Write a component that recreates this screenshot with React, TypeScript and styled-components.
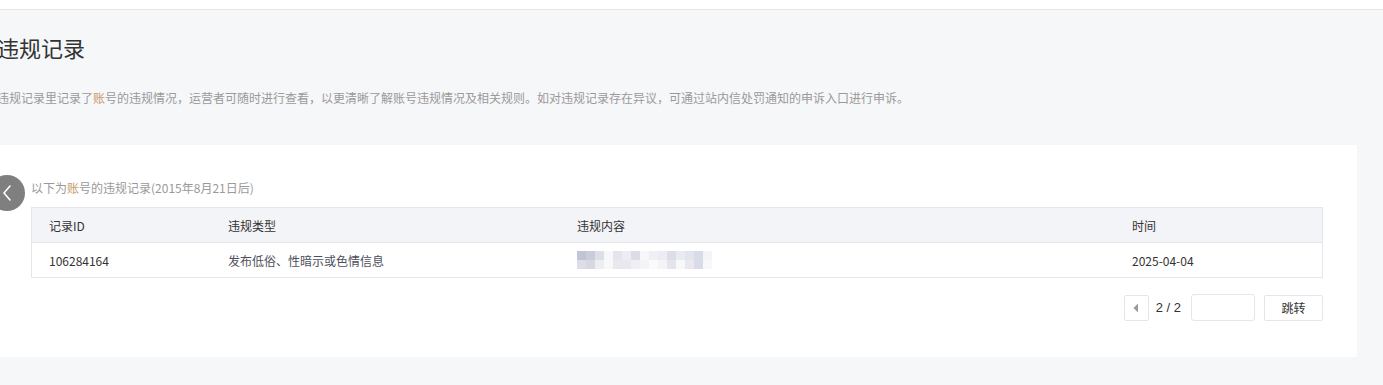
import React from 'react';
import styled, { createGlobalStyle } from 'styled-components';

const GlobalStyle = createGlobalStyle`
  html, body {
    margin: 0;
    padding: 0;
    background: #f6f7f9;
    overflow: hidden;
  }
  body {
    font-family: "Noto Sans CJK SC", "Noto Sans", sans-serif;
    color: #333;
  }
`;

const TopBar = styled.div`
  height: 9px;
  background: #fff;
  border-bottom: 1px solid #e4e5e7;
`;

const Main = styled.div`
  margin-left: -3px;
  width: 1360px;
`;

const Title = styled.h1`
  margin: 0;
  padding-top: 22px;
  font-size: 22px;
  font-weight: 400;
  line-height: 30px;
  color: #333;
`;

const Desc = styled.p`
  margin: 0;
  padding-top: 27px;
  font-size: 12px;
  line-height: 18px;
  color: #9a9a9a;
`;

const Hl = styled.span`
  color: #c99a68;
`;

const Card = styled.div`
  position: relative;
  margin-top: 38px;
  margin-left: 3px;
  width: 1357px;
  box-sizing: border-box;
  background: #fff;
  border-radius: 0 2px 2px 0;
  padding: 35px 34px 36px 31px;
`;

const BackBtn = styled.div`
  position: absolute;
  left: -11px;
  top: 30px;
  width: 36px;
  height: 36px;
  border-radius: 50%;
  background: #7f7f7f;
  display: flex;
  align-items: center;
  justify-content: center;
`;

const Caption = styled.div`
  font-size: 12px;
  line-height: 16px;
  color: #9a9a9a;
  margin-bottom: 11px;
`;

const Table = styled.table`
  width: 1292px;
  border-collapse: collapse;
  table-layout: fixed;
  font-size: 12px;
`;

const Th = styled.th<{ $w?: number }>`
  width: ${(p) => (p.$w ? `${p.$w}px` : 'auto')};
  height: 34px;
  padding: 0 0 0 17px;
  text-align: left;
  font-weight: 400;
  color: #333;
  background: #f3f4f7;
  border-top: 1px solid #e4e6eb;
  border-bottom: 1px solid #e4e6eb;
  &:first-child { border-left: 1px solid #e4e6eb; }
  &:last-child { border-right: 1px solid #e4e6eb; }
`;

const Td = styled.td<{ $muted?: boolean }>`
  height: 34px;
  padding: 0 0 0 17px;
  color: ${(p) => (p.$muted ? '#4d4f5c' : '#333')};
  border-bottom: 1px solid #e4e6eb;
  &:first-child { border-left: 1px solid #e4e6eb; }
  &:last-child { border-right: 1px solid #e4e6eb; }
`;

const Mosaic = styled.div`
  display: grid;
  grid-template-columns: repeat(15, 9px);
  grid-auto-rows: 9px;
`;

const Px = styled.div<{ $c: string }>`
  background: ${(p) => p.$c};
`;

const Pager = styled.div`
  display: flex;
  justify-content: flex-end;
  align-items: center;
  margin-top: 16px;
  height: 27px;
`;

const PrevBtn = styled.div`
  width: 23px;
  height: 24px;
  border: 1px solid #e4e6eb;
  border-radius: 2px;
  display: flex;
  align-items: center;
  justify-content: center;
  box-sizing: content-box;
`;

const PageText = styled.span`
  font-family: "Liberation Sans", sans-serif;
  font-size: 13px;
  color: #333;
  margin: 0 10px 0 7px;
`;

const PageInput = styled.input`
  width: 64px;
  height: 27px;
  box-sizing: border-box;
  border: 1px solid #e4e6eb;
  border-radius: 3px;
  outline: none;
`;

const JumpBtn = styled.button`
  margin-left: 9px;
  width: 59px;
  height: 26px;
  border: 1px solid #e4e6eb;
  border-radius: 2px;
  background: #fff;
  font-family: "Noto Sans CJK SC", sans-serif;
  font-size: 12px;
  color: #333;
  padding: 0;
`;

const mosaicTop = [
  '#c0c4d4', '#c8ccdb', '#dcdee8', '#f8f8fa', '#e4e4ec', '#ececf2', '#dcdce8', '#f8f8fa',
  '#f0f0f4', '#ececf2', '#dcdde6', '#e8ebf2', '#e4e4ec', '#d8dce8', '#f4f4f8',
];
const mosaicBottom = [
  '#dcdde6', '#d6d8e2', '#eeeef2', '#f8f8fa', '#e8e8ee', '#e8e8ee', '#f0f0f4', '#f4f4f6',
  '#fafafa', '#f4f4f6', '#e4e4ec', '#f8f8fa', '#e8e8ee', '#d8dce8', '#f8f8fa',
];

const App = () => {
  return (
    <>
      <GlobalStyle />
      <TopBar />
      <Main>
        <Title>违规记录</Title>
        <Desc>
          违规记录里记录了<Hl>账</Hl>号的违规情况，运营者可随时进行查看，以更清晰了解账号违规情况及相关规则。如对违规记录存在异议，可通过站内信处罚通知的申诉入口进行申诉。
        </Desc>
        <Card>
          <BackBtn>
            <svg width="12" height="18" viewBox="0 0 12 18" fill="none">
              <path d="M9 2L3 9l6 7" stroke="#fff" strokeWidth="1.6" strokeLinecap="round" strokeLinejoin="round" />
            </svg>
          </BackBtn>
          <Caption>
            以下为<Hl>账</Hl>号的违规记录(2015年8月21日后)
          </Caption>
          <Table>
            <thead>
              <tr>
                <Th $w={162}>记录ID</Th>
                <Th $w={332}>违规类型</Th>
                <Th $w={538}>违规内容</Th>
                <Th>时间</Th>
              </tr>
            </thead>
            <tbody>
              <tr>
                <Td>106284164</Td>
                <Td $muted>发布低俗、性暗示或色情信息</Td>
                <Td>
                  <Mosaic>
                    {mosaicTop.concat(mosaicBottom).map((c, i) => (
                      <Px key={i} $c={c} />
                    ))}
                  </Mosaic>
                </Td>
                <Td>2025-04-04</Td>
              </tr>
            </tbody>
          </Table>
          <Pager>
            <PrevBtn>
              <svg width="6" height="10" viewBox="0 0 6 10">
                <path d="M5 0.5L0.5 5 5 9.5z" fill="#9a9a9a" />
              </svg>
            </PrevBtn>
            <PageText>2 / 2</PageText>
            <PageInput />
            <JumpBtn>跳转</JumpBtn>
          </Pager>
        </Card>
      </Main>
    </>
  );
};

export default App;
